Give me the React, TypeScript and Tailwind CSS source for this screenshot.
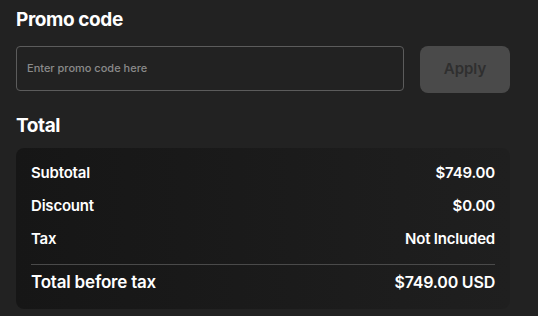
export default function App() {
  const font = { fontFamily: 'Inter, "Noto Sans", sans-serif' };
  return (
    <div className="w-[538px] h-[316px] bg-[#222222] text-white overflow-hidden" style={font}>
      <div className="pl-4 pr-[28px] pt-[7px]">
        <h2 className="text-[19px] leading-[26px] font-bold tracking-[-0.4px]">Promo code</h2>
        <div className="flex gap-4 mt-[13px]">
          <div className="flex-1 h-[45px] border border-[#5c5c5c] rounded-[4px] flex items-center pl-[10px]">
            <span className="text-[11px] font-medium text-[#8a8a8a]">Enter promo code here</span>
          </div>
          <div className="w-[90px] h-[47px] rounded-[8px] bg-[#4a4a4a] flex items-center justify-center">
            <span className="text-[15px] font-semibold text-[#2f2f2f]">Apply</span>
          </div>
        </div>
        <h2 className="text-[19px] leading-[26px] font-bold tracking-[-0.4px] mt-[20px]">Total</h2>
        <div className="mt-[9px] rounded-[8px] bg-gradient-to-r from-[#161616] to-[#1f1f1f] px-[15px] pt-[14px] pb-[15px]">
          <div className="flex justify-between text-[15px] font-semibold leading-[22px] tracking-[-0.2px]">
            <span>Subtotal</span>
            <span>$749.00</span>
          </div>
          <div className="flex justify-between text-[15px] font-semibold leading-[22px] tracking-[-0.2px] mt-[11px]">
            <span>Discount</span>
            <span>$0.00</span>
          </div>
          <div className="flex justify-between text-[15px] font-semibold leading-[22px] tracking-[-0.2px] mt-[11px]">
            <span>Tax</span>
            <span>Not Included</span>
          </div>
          <div className="h-px bg-[#4a4a4a] mt-[14px]" />
          <div className="flex justify-between text-[17px] font-semibold leading-[24px] tracking-[-0.2px] mt-[5px]">
            <span>Total before tax</span>
            <span className="text-[16px]">$749.00 USD</span>
          </div>
        </div>
      </div>
    </div>
  );
}
